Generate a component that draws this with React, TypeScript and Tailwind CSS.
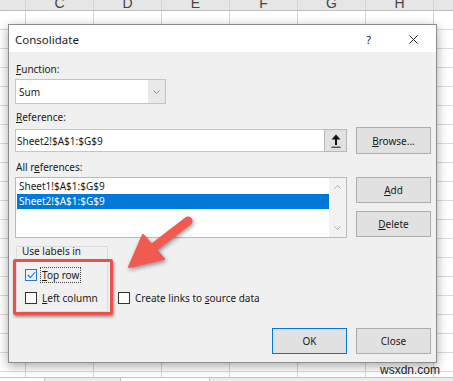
import React from "react";

const letters = ["", "C", "D", "E", "F", "G", "H", ""];
const rows = Array.from({ length: 19 }, (_, i) => i);

const Cell = ({ i, children }: { i: number; children?: React.ReactNode }) => (
  <div
    className={
      (i === 0 ? "w-[26px]" : i === 7 ? "w-[40px]" : "w-[68px]") +
      " shrink-0 border-r border-[#d4d4d4] h-full overflow-hidden"
    }
  >
    {children}
  </div>
);

const Checkbox = ({ checked, focus }: { checked?: boolean; focus?: boolean }) => (
  <div
    className={
      "w-[12px] h-[12px] shrink-0 border flex items-center justify-center " +
      (focus ? "border-[#2a74d4] bg-[#eaf3fc]" : "border-[#333333] bg-white")
    }
  >
    {checked && (
      <svg width="9" height="8" viewBox="0 0 9 8">
        <path d="M0.8 4 L3.4 6.6 L8.2 1" fill="none" stroke="#2a74d4" strokeWidth="1.1" />
      </svg>
    )}
  </div>
);

const Button = ({ children, primary }: { children: React.ReactNode; primary?: boolean }) => (
  <div
    className={
      "w-[75px] h-[26px] flex items-center justify-center bg-[#e1e1e1] border " +
      (primary ? "border-[#0078d7]" : "border-[#adadad]")
    }
  >
    {children}
  </div>
);

export default function App() {
  return (
    <div className="relative w-[453px] h-[381px] overflow-hidden bg-white font-['Liberation_Sans',Arial,sans-serif]">
      {/* sheet header */}
      <div className="flex h-[11px] bg-[#e6e6e6] border-b border-[#bdbdbd]">
        {letters.map((l, i) => (
          <Cell key={i} i={i}>
            <div className="-mt-[4px] text-center text-[14px] leading-[14px] text-[#444]">{l}</div>
          </Cell>
        ))}
      </div>
      {rows.map((r) => (
        <div key={r} className="flex h-[19px] border-b border-[#dadada]">
          {letters.map((_, i) => (
            <Cell key={i} i={i} />
          ))}
        </div>
      ))}
      <div className="flex h-[5px]">
        {letters.map((_, i) => (
          <Cell key={i} i={i} />
        ))}
      </div>
      {/* sheet tabs */}
      <div className="flex h-[10px] bg-[#ececec] border-t border-[#c3c3c3]">
        <div className="w-[45px] bg-white border-r border-[#c3c3c3]" />
        <div className="ml-[75px] w-[90px] bg-white border-l border-r border-[#c3c3c3]" />
      </div>

      {/* dialog */}
      <div className="absolute left-[8px] top-[24px] w-[429px] border border-[#8c8c8c] bg-[#f0f0f0] shadow-[0_3px_10px_rgba(0,0,0,0.35)] font-['Noto_Sans',sans-serif] text-[#1a1a1a]">
        <div className="flex h-[27px] items-center bg-white pl-[6px] pt-[2px]">
          <span className="text-[11.5px] leading-[14px]">Consolidate</span>
          <span className="ml-auto text-[11px] leading-[14px]">?</span>
          <svg className="ml-[38px] mr-[18px]" width="9" height="9" viewBox="0 0 9 9">
            <path d="M0.5 0.5 L8.5 8.5 M8.5 0.5 L0.5 8.5" stroke="#222" strokeWidth="1" />
          </svg>
        </div>

        <div className="pl-[6px] pr-[5px] pt-[10px] pb-[8px] text-[10px] leading-[14px]">
          <div className="h-[14px] pl-[1px]">
            <u>F</u>unction:
          </div>
          <div className="mt-[3px] flex h-[25px] w-[151px] border border-[#c4c4c4] bg-white">
            <div className="flex items-center pl-[3px]">Sum</div>
            <div className="ml-auto flex w-[17px] items-center justify-center bg-[#e9e9e9]">
              <svg width="7" height="4" viewBox="0 0 7 4">
                <path d="M0.5 0.5 L3.5 3.5 L6.5 0.5" fill="none" stroke="#8a8a8a" strokeWidth="1" />
              </svg>
            </div>
          </div>

          <div className="mt-[6px] h-[14px] pl-[1px]">
            <u>R</u>eference:
          </div>
          <div className="mt-[3px] flex h-[27px] items-center">
            <div className="flex h-[23px] w-[332px]">
              <div className="flex flex-1 items-center border border-r-0 border-[#c4c4c4] bg-white pl-[1px]">
                Sheet2!$A$1:$G$9
              </div>
              <div className="flex w-[23px] items-center justify-center border border-[#b8b8b8] bg-[#e1e1e1]">
                <svg width="10" height="14" viewBox="0 0 10 14">
                  <path d="M5 0.5 L9.5 5.5 L6 5.5 L6 11 L4 11 L4 5.5 L0.5 5.5 Z" fill="#111" />
                  <path d="M0.5 13.2 L9.5 13.2" stroke="#111" strokeWidth="1" />
                </svg>
              </div>
            </div>
            <div className="ml-[9px] flex h-[27px] w-[75px] items-center justify-center border border-[#adadad] bg-[#e1e1e1]">
              <span>
                <u>B</u>rowse...
              </span>
            </div>
          </div>

          <div className="mt-[6px] h-[14px] pl-[1px]">
            All r<u>e</u>ferences:
          </div>
          <div className="mt-[3px] flex">
            <div className="flex h-[61px] w-[332px] border border-[#b9b9b9] bg-white">
              <div className="flex-1 pt-[1px] pl-[1px]">
                <div className="h-[15px] pl-[2px] leading-[15px]">Sheet1!$A$1:$G$9</div>
                <div className="h-[15px] bg-[#0078d7] pl-[2px] leading-[15px] text-white">Sheet2!$A$1:$G$9</div>
              </div>
              <div className="flex w-[17px] flex-col items-center justify-between bg-[#f2f2f2] py-[7px]">
                <svg width="7" height="4" viewBox="0 0 7 4">
                  <path d="M0.5 3.5 L3.5 0.5 L6.5 3.5" fill="none" stroke="#a8a8a8" strokeWidth="1" />
                </svg>
                <svg width="7" height="4" viewBox="0 0 7 4">
                  <path d="M0.5 0.5 L3.5 3.5 L6.5 0.5" fill="none" stroke="#a8a8a8" strokeWidth="1" />
                </svg>
              </div>
            </div>
            <div className="ml-[9px] flex flex-col gap-[8px]">
              <Button>
                <span>
                  <u>A</u>dd
                </span>
              </Button>
              <Button>
                <span>
                  <u>D</u>elete
                </span>
              </Button>
            </div>
          </div>

          <div className="mt-[8px] flex items-end">
            <div className="ml-[1px] w-[92px] border border-[#dcdcdc] pl-[8px] pb-[5px]">
              <div className="-mt-[3px] -ml-[3px] h-[14px]">Use labels in</div>
              <div className="mt-[9px] flex h-[16px] items-center">
                <Checkbox checked focus />
                <span className="ml-[3px] h-[16px] border border-dotted border-[#444] px-[1px]">
                  <u>T</u>op row
                </span>
              </div>
              <div className="mt-[7px] flex h-[16px] items-center">
                <Checkbox />
                <span className="ml-[3px] h-[16px] border border-transparent px-[1px]">
                  <u>L</u>eft column
                </span>
              </div>
            </div>
            <div className="mb-[6px] ml-[10px] flex h-[16px] items-center">
              <Checkbox />
              <span className="ml-[5px]">
                Create links to <u>s</u>ource data
              </span>
            </div>
          </div>

          <div className="mt-[16px] flex justify-end gap-[9px]">
            <Button primary>OK</Button>
            <Button>Close</Button>
          </div>
        </div>
      </div>

      {/* annotation box */}
      <div className="absolute left-[13px] top-[259px] h-[56px] w-[100px] rounded-[2px] border-[3px] border-[#e8524a] shadow-[1px_2px_3px_rgba(0,0,0,0.4)]" />

      {/* annotation arrow */}
      <svg
        className="pointer-events-none absolute left-0 top-0 drop-shadow-[1px_2px_2px_rgba(0,0,0,0.4)]"
        width="453"
        height="381"
        viewBox="0 0 453 381"
      >
        <line x1="188" y1="221" x2="149" y2="251" stroke="#f05a50" strokeWidth="9" strokeLinecap="round" />
        <polygon points="129,267 143,235 164,259" fill="#f05a50" strokeLinejoin="round" stroke="#f05a50" strokeWidth="2" />
      </svg>

      <div className="absolute left-[380px] top-[363px] text-[12px] leading-[14px] text-[#222]">wsxdn.com</div>
    </div>
  );
}
